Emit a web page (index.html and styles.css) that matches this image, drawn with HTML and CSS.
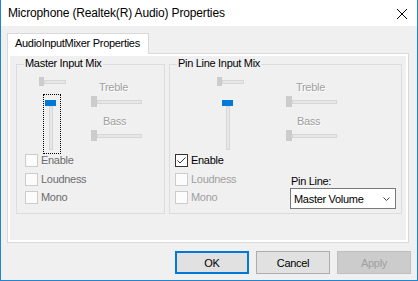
FILE: index.html
```html
<!DOCTYPE html>
<html>
<head>
<meta charset="utf-8">
<link rel="stylesheet" href="styles.css">
</head>
<body>
<div class="window">
  <div class="titlebar">
    <span class="title">Microphone (Realtek(R) Audio) Properties</span>
    <svg class="close" width="10" height="10" viewBox="0 0 10 10"><path d="M0 0L10 10M10 0L0 10" stroke="#000" stroke-width="1" fill="none"/></svg>
  </div>
  <div class="content">
    <div class="tab">AudioInputMixer Properties</div>
    <div class="panel">
      <div class="page">
        <div class="group master">
          <span class="legend">Master Input Mix</span>
          <div class="mixer">
            <div class="col-a">
              <div class="hs-small"><div class="thumb"></div><div class="track"></div></div>
              <div class="vs focus"><div class="vthumb"></div><div class="vtrack"></div></div>
            </div>
            <div class="col-b">
              <div class="dlabel treble">Treble</div>
              <div class="hs"><div class="thumb"></div><div class="track"></div></div>
              <div class="dlabel bass">Bass</div>
              <div class="hs"><div class="thumb"></div><div class="track"></div></div>
            </div>
          </div>
          <div class="checks">
            <div class="check dim"><span class="box"></span><span>Enable</span></div>
            <div class="check dim"><span class="box"></span><span>Loudness</span></div>
            <div class="check dim"><span class="box"></span><span>Mono</span></div>
          </div>
        </div>
        <div class="group pin">
          <span class="legend">Pin Line Input Mix</span>
          <div class="mixer">
            <div class="col-a">
              <div class="hs-small"><div class="thumb"></div><div class="track"></div></div>
              <div class="vs"><div class="vthumb"></div><div class="vtrack"></div></div>
            </div>
            <div class="col-b">
              <div class="dlabel treble">Treble</div>
              <div class="hs"><div class="thumb"></div><div class="track"></div></div>
              <div class="dlabel bass">Bass</div>
              <div class="hs"><div class="thumb"></div><div class="track"></div></div>
            </div>
          </div>
          <div class="bottom-row">
            <div class="checks">
              <div class="check on"><span class="box checked"><svg width="11" height="11" viewBox="0 0 11 11"><polyline points="1.5,5.5 4,8 9.5,2.5" fill="none" stroke="#333" stroke-width="1"/></svg></span><span>Enable</span></div>
              <div class="check off"><span class="box"></span><span>Loudness</span></div>
              <div class="check off"><span class="box"></span><span>Mono</span></div>
            </div>
            <div class="pinline">
              <div class="pl-label">Pin Line:</div>
              <div class="combo"><span>Master Volume</span><svg width="7" height="4" viewBox="0 0 7 4"><polyline points="0.5,0.5 3.5,3.5 6.5,0.5" fill="none" stroke="#444" stroke-width="1"/></svg></div>
            </div>
          </div>
        </div>
      </div>
    </div>
    <div class="buttons">
      <button class="btn default">OK</button>
      <button class="btn">Cancel</button>
      <button class="btn disabled">Apply</button>
    </div>
  </div>
</div>
</body>
</html>
```

FILE: styles.css
```css
* { box-sizing: border-box; }
html, body { margin: 0; padding: 0; background: #f0f0f0; }
body {
  font-family: "Liberation Sans", Arial, sans-serif;
  font-size: 11px;
  letter-spacing: -0.3px;
  color: #000;
}
.window {
  width: 418px;
  height: 281px;
  border: 1px solid #1f86d6;
  border-top: 0;
  background: #f0f0f0;
  display: flex;
  flex-direction: column;
}
.titlebar {
  height: 26px;
  background: #fff;
  display: flex;
  align-items: center;
  padding: 0 10px 0 7px;
}
.title { font-size: 12px; letter-spacing: -0.15px; }
.close { margin-left: auto; margin-top: 1px; }
.content { padding: 7px 6px 0 6px; }
.tab {
  position: relative;
  z-index: 1;
  width: 142px;
  height: 21px;
  margin-bottom: -1px;
  border: 1px solid #d9d9d9;
  border-bottom: 0;
  background: #fff;
  padding-left: 7px;
  line-height: 19px;
}
.panel {
  width: 402px;
  height: 190px;
  border: 1px solid #d9d9d9;
  background: #fff;
  padding: 2px;
}
.page {
  height: 100%;
  background: #f0f0f0;
  padding: 8px 4px 0 6px;
  display: flex;
  gap: 4px;
}
.group {
  position: relative;
  height: 150px;
  border: 1px solid #dcdcdc;
}
.master { width: 149px; }
.pin { width: 233px; }
.legend {
  position: absolute;
  top: -8px;
  left: 7px;
  padding: 0 1px;
  background: #f0f0f0;
  line-height: 13px;
}
.mixer { display: flex; }
.col-a { display: flex; flex-direction: column; align-items: flex-start; }
.col-b { display: flex; flex-direction: column; align-items: flex-start; }
.master .col-a { margin-left: 22px; width: 22px; }
.master .col-b { margin-left: 30px; }
.pin .col-a { margin-left: 47px; width: 21px; }
.pin .col-b { margin-left: 48px; }
.hs-small { display: flex; align-items: center; height: 9px; margin-top: 12px; }
.hs-small .thumb { width: 5px; height: 9px; background: #cccccc; }
.hs-small .track { width: 22px; height: 4px; background: #e7e7e7; border: 1px solid #d6d6d6; }
.vs {
  width: 18px;
  height: 60px;
  margin-top: 8px;
  margin-left: 4px;
  border: 1px dotted #000;
  padding: 5px 0 0 1px;
  display: flex;
  flex-direction: column;
  align-items: flex-start;
}
.pin .vs { border-color: transparent; margin-left: 3px; }
.vthumb { width: 11px; height: 6px; background: #0078d7; }
.vtrack { width: 4px; height: 44px; margin-left: 4px; background: #e7e7e7; border: 1px solid #d6d6d6; }
.dlabel {
  line-height: 13px;
  color: #a0a0a0;
  text-shadow: 1px 1px 0 #fff;
}
.treble { margin-top: 16px; margin-left: 8px; }
.bass { margin-top: 8px; margin-left: 12px; }
.pin .treble { margin-left: 10px; }
.pin .bass { margin-left: 11px; }
.hs { display: flex; align-items: center; height: 11px; margin-top: 2px; }
.hs .thumb { width: 6px; height: 11px; background: #cccccc; }
.hs .track { width: 45px; height: 4px; background: #e7e7e7; border: 1px solid #d6d6d6; }
.checks { display: flex; flex-direction: column; gap: 5.5px; }
.master .checks { margin-left: 8px; }
.check { display: flex; align-items: center; gap: 3px; line-height: 13px; height: 13px; }
.box {
  width: 13px;
  height: 13px;
  border: 1px solid #cccccc;
  background: #fcfcfc;
  display: block;
}
.box.checked { border-color: #333; background: #fff; }
.box svg { display: block; }
.dim { color: #6d6d6d; }
.off { color: #a0a0a0; }
.bottom-row { display: flex; }
.pin .checks { margin-left: 5px; width: 115px; }
.pinline { margin-top: 21px; }
.pl-label { line-height: 13px; margin-left: 1px; }
.combo {
  width: 106px;
  height: 21px;
  border: 1px solid #7a7a7a;
  background: #fff;
  display: flex;
  align-items: center;
  justify-content: space-between;
  padding: 0 5px 0 3px;
}
.combo svg { display: block; }
.buttons {
  display: flex;
  justify-content: flex-end;
  gap: 7px;
  margin-top: 8px;
}
.btn {
  width: 74px;
  height: 23px;
  padding: 0;
  font-family: inherit;
  font-size: 11px;
  letter-spacing: -0.3px;
  color: #000;
  background: #e1e1e1;
  border: 1px solid #adadad;
}
.btn.default { border: 2px solid #0078d7; }
.btn.disabled { background: #cccccc; border-color: #bfbfbf; color: #a0a0a0; }
```
